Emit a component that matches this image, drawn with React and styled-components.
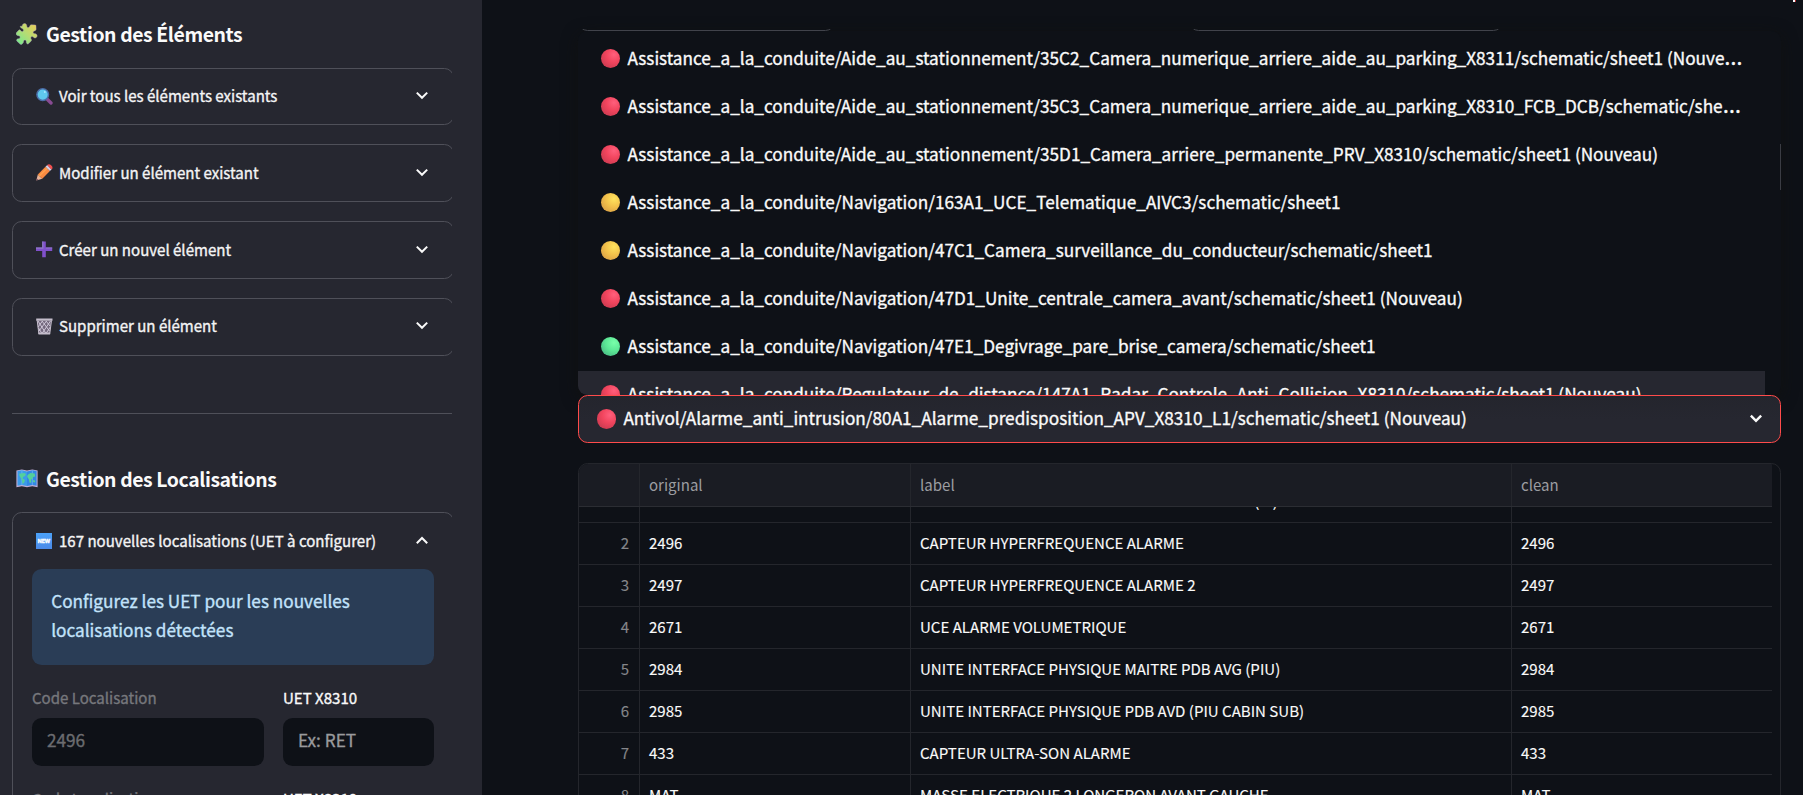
import React from 'react';
import styled, { createGlobalStyle } from 'styled-components';

const Global = createGlobalStyle`
  * { box-sizing: border-box; }
  html, body { margin: 0; height: 795px; overflow: hidden; background: #0e1117; }
  body { font-family: "Noto Sans CJK SC", "Noto Sans", sans-serif; color: #fafafa; font-size: 17.2px; }
`;
const Page = styled.div`display: flex; width: 1803px; height: 795px; overflow: hidden;`;
const Sidebar = styled.aside`
  width: 482px; flex: none; height: 795px; background: #262730; padding-left: 12px; overflow: hidden;
  -webkit-text-stroke: .35px currentColor;
`;
const SideContent = styled.div`width: 440px; overflow: hidden;`;
const Heading = styled.h3`
  display: flex; align-items: center; gap: 8px; margin: ${p => p.$top}px 0 0 4px; height: 30px;
  font-size: 19.4px; font-weight: 700; line-height: 30px; white-space: nowrap; letter-spacing: -.4px;
  -webkit-text-stroke: 0;
`;
const Expanders = styled.div`display: flex; flex-direction: column; gap: 19.2px; margin-top: ${p => p.$top}px;`;
const Expander = styled.section`
  width: 442px; border: 1px solid #4f5059; border-radius: 9.6px; ${p => p.$open ? 'height: 420px;' : 'height: 57.6px;'}
`;
const Summary = styled.div`
  display: flex; align-items: center; height: 55px; padding: ${p => p.$low ? 1 : 0}px 25px 0 23px; gap: 6px;
  font-size: 15.05px; white-space: nowrap; color: #f4f4f5;
  & > span { flex: 1; line-height: 24px; }
`;
const Divider = styled.hr`width: 440px; border: 0; height: 1px; background: #4f5059; margin: 57.4px 0 0;`;
const Info = styled.div`
  width: 402px; height: 96px; margin: 1px 0 0 19px; padding: 18.2px 19.2px; border-radius: 9.6px;
  background: #2a3d56; color: #c2e3fb; line-height: 28.8px; font-size: 17.2px;
`;
const Fields = styled.div`display: flex; gap: 19px; margin: 21px 0 0 19px;`;
const Field = styled.label`
  width: ${p => p.$w}px; font-size: 15.05px; line-height: 24px; color: ${p => p.$dim ? '#76777c' : '#fafafa'};
`;
const Input = styled.div`
  height: 48px; margin-top: 8px; padding: 0 15px; border-radius: 9.6px; background: #0e1117;
  font-size: 17.2px; line-height: 44px; color: ${p => p.$dim ? '#6b6c70' : '#999a9d'};
`;
const Main = styled.main`position: relative; flex: 1; padding: 29px 22px 0 96px; overflow: hidden;`;
const Corner = styled.i`
  position: absolute; top: 0; right: 7px; width: 3px; height: 2px; background: linear-gradient(90deg, #fafafa 66%, #b3282d 66%);
`;
const ButtonEdges = styled.div`display: flex; gap: 354px; height: 2px; overflow: hidden; align-items: flex-end;`;
const ButtonEdge = styled.div`
  width: ${p => p.$w}px; height: 48px; flex: none; border: 1px solid #41434b; border-radius: 9.6px;
`;
const Popover = styled.div`
  position: relative; width: 1203px; height: 364px; padding-top: 4px; overflow: hidden; background: #0e1117;
  border-radius: 9.6px;
`;
const PopoverShadow = styled.div`width: 1203px; border-radius: 9.6px; box-shadow: 0 4px 16px rgba(17, 17, 14, .7);`;
const Thumb = styled.i`position: absolute; right: 0; top: 113px; width: 1px; height: 46px; background: #3a3c43;`;
const Option = styled.div`
  display: flex; align-items: center; gap: 7px; height: 48px; width: 1187px; padding: 0 20px 1px 23px;
  background: ${p => p.$active ? '#262730' : 'transparent'};
`;
/* The ellipsis takes the block's own font, whose dots sit on the baseline. */
const PathText = styled.div`
  flex: 1; min-width: 0; height: 26px; margin-top: -6px; font-family: "Open Sans", sans-serif; font-size: 23.5px; line-height: 26px;
  white-space: nowrap; overflow: hidden; text-overflow: ellipsis; -webkit-text-stroke: .35px currentColor;
  & > span { font-family: "Noto Sans CJK SC", sans-serif; font-size: 17.2px; line-height: 20px; }
`;
const Dot = styled.i`
  flex: none; width: 19.4px; height: 19.4px; border-radius: 50%;
  background: ${p => ({
    red: 'radial-gradient(circle at 68% 30%, #ff5f7c 0%, #f2455e 40%, #c93a50 85%, #ba4a6a 100%)',
    yellow: 'radial-gradient(circle at 68% 30%, #ffe45e 0%, #f2c04a 45%, #d9a046 85%, #c98560 100%)',
    green: 'radial-gradient(circle at 68% 30%, #78ffaa 0%, #5be695 45%, #48b883 85%, #478f96 100%)',
  }[p.$c])};
`;
const Select = styled.div`
  position: relative; display: flex; align-items: center; gap: 7px; width: 1203px; height: 48px; padding: 0 18px;
  border: 1px solid #ff4b4b; border-radius: 9.6px; background: linear-gradient(#24252d, #262730 50%);
`;
const Table = styled.div`
  margin-top: 20px; width: 1203px; height: 360px; border: 1px solid #24262c; border-radius: 9.6px; overflow: hidden;
`;
const Header = styled.div`
  display: grid; grid-template-columns: 61px 271px 601px 260px; width: 1193px; height: 43px; background: #1a1c23; color: #9c9da1;
  border-bottom: 1px solid #2b2d33;
`;
const Rows = styled.div`height: 330px; overflow: hidden; -webkit-text-stroke: .12px currentColor;`;
const Row = styled.div`
  display: grid; grid-template-columns: 61px 271px 601px 260px; width: 1193px; height: 42px; margin-top: ${p => p.$cut ? -26 : 0}px;
  border-bottom: 1px solid #24262c;
`;
const Cell = styled.div`
  padding: 0 9px; border-right: ${p => p.$last ? 0 : '1px solid #24262c'}; font-size: 15.05px; line-height: ${p => p.$h || 40}px;
  white-space: nowrap; text-align: ${p => p.$idx ? 'right' : 'left'}; color: ${p => p.$idx ? '#85868a' : 'inherit'};
  ${p => p.$idx && 'padding-right: 10px;'}
`;

const Chevron = ({ up, thick }) => (
  <svg width="12" height="12" viewBox="0 0 12 12" fill="none" stroke="#fafafa" strokeWidth={thick ? 2.5 : 2}>
    <path d={up ? 'M.8 8.200 6 3l5.200 5.200' : 'M.8 2.600l5.200 5.200L11.200 2.600'} />
  </svg>
);
const Puzzle = () => (
  <svg width="22" height="22" viewBox="0 0 22 22">
    <defs><linearGradient id="pz" x1="1" y1="0" x2="0" y2="1"><stop stopColor="#f0cb52" /><stop offset=".5" stopColor="#b5dc74" /><stop offset="1" stopColor="#6deb91" /></linearGradient></defs>
    <path fill="url(#pz)" stroke="#b9a3c7" strokeWidth=".4" d="M6.200 3.300C5.900 1.400 8.200-.3 9.800.9c1.500 1.100.6 2.500 1.400 3.300.9.800 2 .2 2.400-.8.400-1.100 1-1.600 1.700-1.600l3.700.1c.7 0 1 .4 1 1l.1 3.300c0 .9-.7 1.400-1.700 1.700-1.200.3-1.700 1.500-.9 2.400.8.800 2 0 3.100 1.200 1.300 1.500 0 3.600-1.700 3.500-1.300-.1-1.500-1.300-2.600-1.400-1.200-.1-1.900 1.100-1.300 2.100.6.900.8 1.600.2 2.200l-2.500 2.700c-.6.600-1.300.6-1.900-.1-.9-.9-.1-2.100-.9-3-.8-.8-2.100-.3-2.300.8-.3 1.200-.2 1.700-1 2.300l-.7.6c-.7.500-1.400.400-1.900-.1l-3-2.900c-.6-.7-.6-1.300 0-1.900.9-.9 2.200-.4 2.900-1.300.6-.9 0-2-1-2.200-1.100-.2-1.900-.3-2.500-1.100-.5-.7-.4-1.500.1-2.100l2.200-2.300c.8-.8 1.600-.400 2.100.5.600 1 2.100 1 2.600-.1.500-1.200-.8-2-1.700-2.400-.9-.5-1.400-1.100-1.500-2Z" />
  </svg>
);
const Magnifier = () => (
  <svg width="17" height="17" viewBox="0 0 17 17">
    <path d="m10.500 10.500 4.500 4.500" stroke="#884b93" strokeWidth="3.300" strokeLinecap="round" />
    <circle cx="6.700" cy="6.600" r="5.800" fill="#5fc9ee" stroke="#4c6da8" strokeWidth="1.500" />
    <circle cx="8.800" cy="4" r="1" fill="#a9e8ff" />
  </svg>
);
const Pencil = () => (
  <svg width="17" height="17" viewBox="0 0 17 17">
    <path d="m1.800 10.500-1.500 5.900 6-1.600Z" fill="#e9b59a" />
    <path d="m1.800 10.500 7.700-7.800 4.400 4.400-7.600 7.700Z" fill="#f98a42" />
    <path d="m3.300 12 7.800-7.700" stroke="#ffa24e" strokeWidth="1.500" />
    <path d="m9.500 2.700 1.700-1.600 4.400 4.400-1.700 1.600Z" fill="#d8cfe4" />
    <path d="M11.200 1.100c1-1 2.500-1 3.600 0l1 1c1 1 .9 2.500-.2 3.400Z" fill="#f4504f" />
    <path d="m.3 16.400.6-2 1.400 1.400Z" fill="#7d4b63" />
  </svg>
);
const Plus = () => (
  <svg width="17" height="17" viewBox="0 0 17 17">
    <path d="M6.200.4h3.600v6h6.400V10H9.800v6.200H6.200V10H0V6.400h6.200Z" fill="#8050cb" />
    <path d="M0 6.400h6.200v-6h1.200v7.300H0ZM9.800 6.400h6.400v1.200H9.800Z" fill="#8f7bc5" />
  </svg>
);
const Bin = () => (
  <svg width="17" height="17" viewBox="0 0 17 17">
    <path d="M1 2.500h14.600L13.800 16H2.800Z" fill="#73687d" />
    <path d="m2 3 8 12.500M6 3l7.500 10M10 3l4 5M14.500 3 6 15.500M10.500 3 3 13M6.500 3 2 9M2.300 9.800 6 15.500M14.300 9 10 15.500" stroke="#cfc8d9" strokeWidth="1" />
    <path d="M.2.500h16.300v2.300H.2ZM2.500 14.600h11.600V16.400H2.500Z" fill="#c4bdcb" />
    <path d="m1.200 2.500 1.700 13.500M15.500 2.500 13.700 16" stroke="#c4bdcb" />
  </svg>
);
const WorldMap = () => (
  <svg width="22" height="19" viewBox="0 0 22 19">
    <path d="m.4 1.500 5.400-1L11 1.600l5.300-1.100 5.300 1v16.800l-5.300-1-5.300 1-5.200-1-5.400 1Z" fill="#bfaed5" />
    <path d="m1.500 2 4.400-.7L11 2.500v14.600l-5.100-1.200-4.400.9Z" fill="#3b9bea" />
    <path d="m11 2.500 5.300-1.200 4.300.7v14.800l-4.300-.9-5.300 1.200Z" fill="#3288e4" />
    <path d="m5.900 1.300v14.600M16.300 1.300v14.600" stroke="#6cb7f4" strokeWidth=".8" />
    <path d="M3 4.800 8 4l2 1-1 2-2 1-.5 1.500L9 11l-1 3-1.500.7-.7-4L3.600 7ZM11.500 6l3-2 4.200.5.5 3-2 .5-.8 2-1.300.5.200 3-1.600.5-1-4-1.500-2ZM16.600 11l2.500.5v2l-2-.4Z" fill="#54cf9b" />
  </svg>
);
const NewBadge = styled.i`
  display: grid; place-items: center; flex: none; width: 16px; height: 16px; background: linear-gradient(#4ba2f8, #4b8ae8);
  font: 700 5.2px/16px "Inter", sans-serif; color: #fff;
`;
const IconBox = styled.i`display: flex; flex: none; width: 17px; height: 17px; align-items: center;`;

const A = 'Assistance_a_la_conduite/';
const options = [
  ['red', 'Aide_au_stationnement/35C2_Camera_numerique_arriere_aide_au_parking_X8311/schematic/sheet1 (Nouveau)'],
  ['red', 'Aide_au_stationnement/35C3_Camera_numerique_arriere_aide_au_parking_X8310_FCB_DCB/schematic/sheet1 (Nouveau)'],
  ['red', 'Aide_au_stationnement/35D1_Camera_arriere_permanente_PRV_X8310/schematic/sheet1 (Nouveau)'],
  ['yellow', 'Navigation/163A1_UCE_Telematique_AIVC3/schematic/sheet1'],
  ['yellow', 'Navigation/47C1_Camera_surveillance_du_conducteur/schematic/sheet1'],
  ['red', 'Navigation/47D1_Unite_centrale_camera_avant/schematic/sheet1 (Nouveau)'],
  ['green', 'Navigation/47E1_Degivrage_pare_brise_camera/schematic/sheet1'],
  ['red', 'Regulateur_de_distance/147A1_Radar_Controle_Anti_Collision_X8310/schematic/sheet1 (Nouveau)'],
];
const rows = [
  ['1', '', 'UNITES DE COMMANDE CENTRALE HABITACLES (IT)'],
  ['2', '2496', 'CAPTEUR HYPERFREQUENCE ALARME'],
  ['3', '2497', 'CAPTEUR HYPERFREQUENCE ALARME 2'],
  ['4', '2671', 'UCE ALARME VOLUMETRIQUE'],
  ['5', '2984', 'UNITE INTERFACE PHYSIQUE MAITRE PDB AVG (PIU)'],
  ['6', '2985', 'UNITE INTERFACE PHYSIQUE PDB AVD (PIU CABIN SUB)'],
  ['7', '433', 'CAPTEUR ULTRA-SON ALARME'],
  ['8', 'MAT', 'MASSE ELECTRIQUE 2 LONGERON AVANT GAUCHE'],
];
const sections = [
  [Magnifier, 'Voir tous les éléments existants'],
  [Pencil, 'Modifier un élément existant'],
  [Plus, 'Créer un nouvel élément'],
  [Bin, 'Supprimer un élément'],
];

const UetFields = () => (
  <Fields>
    <Field $w={232} $dim>Code Localisation<Input $dim>2496</Input></Field>
    <Field $w={151}>UET X8310<Input>Ex: RET</Input></Field>
  </Fields>
);

export default function App() {
  return (
    <Page>
      <Global />
      <Sidebar>
        <SideContent>
          <Heading $top={19}><Puzzle />Gestion des Éléments</Heading>
          <Expanders $top={18.6}>
            {sections.map(([Icon, label]) => (
              <Expander key={label}>
                <Summary><IconBox><Icon /></IconBox><span>{label}</span><Chevron /></Summary>
              </Expander>
            ))}
          </Expanders>
          <Divider />
          <Heading $top={50}><WorldMap />Gestion des Localisations</Heading>
          <Expanders $top={18}>
            <Expander $open>
              <Summary $low><IconBox><NewBadge>NEW</NewBadge></IconBox><span>167 nouvelles localisations (UET à configurer)</span><Chevron up /></Summary>
              <Info>Configurez les UET pour les nouvelles localisations détectées</Info>
              <UetFields />
              <UetFields />
            </Expander>
          </Expanders>
        </SideContent>
      </Sidebar>
      <Main>
        <Corner />
        <ButtonEdges><ButtonEdge $w={257} /><ButtonEdge $w={314} /></ButtonEdges>
        <PopoverShadow>
          <Popover>
            {options.map(([c, t], i) => (
              <Option key={t} $active={i === 7}><Dot $c={c} /><PathText><span>{A + t}</span></PathText></Option>
            ))}
            <Thumb />
          </Popover>
        </PopoverShadow>
        <Select>
          <Dot $c="red" />
          <PathText><span>Antivol/Alarme_anti_intrusion/80A1_Alarme_predisposition_APV_X8310_L1/schematic/sheet1 (Nouveau)</span></PathText>
          <Chevron thick />
        </Select>
        <Table>
          <Header>
            <Cell $h={42} />
            <Cell $h={42}>original</Cell>
            <Cell $h={42}>label</Cell>
            <Cell $h={42} $last>clean</Cell>
          </Header>
          <Rows>
            {rows.map(([n, code, label], i) => (
              <Row key={n} $cut={i === 0}>
                <Cell $idx>{n}</Cell><Cell>{code}</Cell><Cell>{label}</Cell><Cell $last>{code}</Cell>
              </Row>
            ))}
          </Rows>
        </Table>
      </Main>
    </Page>
  );
}
